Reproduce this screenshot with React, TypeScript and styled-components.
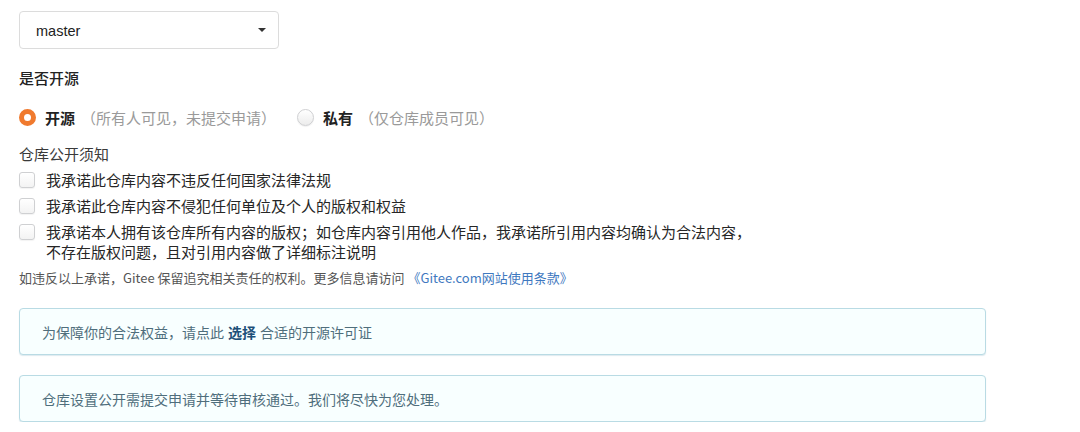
import React from "react";
import styled, { createGlobalStyle } from "styled-components";

const Global = createGlobalStyle`
  html, body { margin: 0; padding: 0; background: #fff; }
  body { font-family: "Liberation Sans", "Noto Sans CJK SC", sans-serif; color: #333; }
`;

const Page = styled.div`
  padding: 11px 0 0 19px;
  width: 967px;
  display: flex;
  flex-direction: column;
`;

const Select = styled.div`
  box-sizing: border-box;
  width: 260px;
  height: 38px;
  border: 1px solid #dcdcdc;
  border-radius: 4px;
  display: flex;
  align-items: center;
  justify-content: space-between;
  padding: 1px 12px 0 16px;
  font-size: 14.5px;
  color: #222;
`;

const Caret = styled.span`
  width: 0;
  height: 0;
  border-left: 4px solid transparent;
  border-right: 4px solid transparent;
  border-top: 4px solid #333;
  margin-top: -2px;
`;

const Label = styled.div<{ $strong?: boolean; $top: number }>`
  margin-top: ${(p) => p.$top}px;
  font-size: 15px;
  line-height: 20px;
  font-family: "Noto Sans CJK SC", sans-serif;
  font-weight: ${(p) => (p.$strong ? 500 : 400)};
  color: ${(p) => (p.$strong ? "#222" : "#3a3a3a")};
`;

const RadioRow = styled.div`
  margin-top: 19px;
  display: flex;
  align-items: center;
  height: 20px;
  gap: 21px;
  font-family: "Noto Sans CJK SC", sans-serif;
  font-size: 15px;
`;

const RadioItem = styled.label`
  display: flex;
  align-items: center;
`;

const RadioDot = styled.span<{ $checked?: boolean }>`
  box-sizing: border-box;
  width: 17px;
  height: 17px;
  border-radius: 50%;
  margin-right: 9px;
  ${(p) =>
    p.$checked
      ? `border: 5px solid #f07a2e; background: #fff;`
      : `border: 1px solid #cfd0d2; background: linear-gradient(#ffffff, #ececec); box-shadow: 0 1px 1px rgba(0,0,0,0.06);`}
`;

const RadioName = styled.span`
  font-weight: 700;
  color: #222;
`;

const Hint = styled.span`
  color: #9a9a9a;
  margin-left: 6px;
`;

const CheckList = styled.div`
  margin-top: 6px;
  display: flex;
  flex-direction: column;
  gap: 6px;
`;

const CheckItem = styled.div`
  display: flex;
  align-items: flex-start;
  gap: 11px;
  font-family: "Noto Sans CJK SC", sans-serif;
  font-size: 15px;
  line-height: 20px;
  color: #262626;
`;

const CheckBox = styled.span`
  box-sizing: border-box;
  flex: none;
  width: 16px;
  height: 16px;
  margin-top: 2px;
  border: 1px solid #cfd0d2;
  border-radius: 3px;
  background: linear-gradient(#ffffff, #f3f3f3);
  box-shadow: 0 1px 1px rgba(0, 0, 0, 0.05);
`;

const CheckText = styled.span`
  width: 720px;
`;

const Note = styled.div`
  margin-top: 7px;
  font-family: "Noto Sans CJK SC", sans-serif;
  font-size: 13px;
  line-height: 18px;
  color: #555;
`;

const Link = styled.a`
  color: #3f79c0;
  text-decoration: none;
`;

const InfoBox = styled.div<{ $top: number }>`
  margin-top: ${(p) => p.$top}px;
  box-sizing: border-box;
  height: 47px;
  padding: 0 22px;
  display: flex;
  align-items: center;
  background: #f8ffff;
  border: 1px solid #b9dbe4;
  border-radius: 4px;
  box-shadow: 0 1px 1px rgba(120, 170, 190, 0.25);
  font-family: "Noto Sans CJK SC", sans-serif;
  font-size: 14px;
  color: #4f6e7c;
`;

const Strong = styled.b`
  color: #1d4f78;
  font-weight: 700;
  margin: 0 4px;
`;

export default function App() {
  return (
    <>
      <Global />
      <Page>
        <Select>
          <span>master</span>
          <Caret />
        </Select>
        <Label $strong $top={19}>是否开源</Label>
        <RadioRow>
          <RadioItem>
            <RadioDot $checked />
            <RadioName>开源</RadioName>
            <Hint>（所有人可见，未提交申请）</Hint>
          </RadioItem>
          <RadioItem>
            <RadioDot />
            <RadioName>私有</RadioName>
            <Hint>（仅仓库成员可见）</Hint>
          </RadioItem>
        </RadioRow>
        <Label $top={17}>仓库公开须知</Label>
        <CheckList>
          <CheckItem>
            <CheckBox />
            <CheckText>我承诺此仓库内容不违反任何国家法律法规</CheckText>
          </CheckItem>
          <CheckItem>
            <CheckBox />
            <CheckText>我承诺此仓库内容不侵犯任何单位及个人的版权和权益</CheckText>
          </CheckItem>
          <CheckItem>
            <CheckBox />
            <CheckText>
              我承诺本人拥有该仓库所有内容的版权；如仓库内容引用他人作品，我承诺所引用内容均确认为合法内容，
              <br />
              不存在版权问题，且对引用内容做了详细标注说明
            </CheckText>
          </CheckItem>
        </CheckList>
        <Note>
          如违反以上承诺，Gitee 保留追究相关责任的权利。更多信息请访问 <Link>《Gitee.com网站使用条款》</Link>
        </Note>
        <InfoBox $top={21}>
          为保障你的合法权益，请点此<Strong>选择</Strong>合适的开源许可证
        </InfoBox>
        <InfoBox $top={20}>仓库设置公开需提交申请并等待审核通过。我们将尽快为您处理。</InfoBox>
      </Page>
    </>
  );
}
